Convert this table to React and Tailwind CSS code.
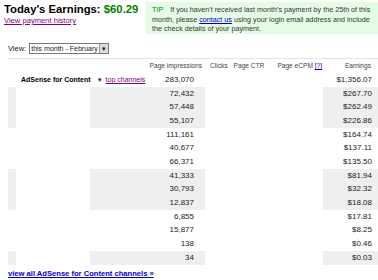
const rows = [
  ['72,432', '$267.70'],
  ['57,448', '$262.49'],
  ['55,107', '$226.86'],
  ['111,161', '$164.74'],
  ['40,677', '$137.11'],
  ['66,371', '$135.50'],
  ['41,333', '$81.94'],
  ['30,793', '$32.32'],
  ['12,837', '$18.08'],
  ['6,855', '$17.81'],
  ['15,877', '$8.25'],
  ['138', '$0.46'],
  ['34', '$0.03'],
]

const shade = 'bg-[#efefef]'

function Row({ shaded, name, impressions, earnings }) {
  const bg = shaded ? shade : ''
  return (
    <div className="grid grid-cols-[8px_74px_115px_118px_1fr] h-[13.7px] items-center">
      <div className={`h-full ${bg}`} />
      <div className="h-full flex items-center overflow-visible">{name}</div>
      <div className={`h-full flex items-center justify-end pr-[11px] ${bg}`}>{impressions}</div>
      <div className="h-full" />
      <div className={`h-full flex items-center justify-end pr-[6px] ${bg}`}>{earnings}</div>
    </div>
  )
}

export default function App() {
  return (
    <div className="w-[378px] h-[280px] bg-white overflow-hidden whitespace-nowrap text-[8px] leading-none text-[#222] font-['Liberation_Sans',Arial,sans-serif]">
      <div className="flex items-start">
        <div className="pl-[4px] pt-[3px]">
          <div className="text-[11.3px] font-bold text-black leading-[12px]">
            Today's Earnings: <span className="text-[#008000]">$60.29</span>
          </div>
          <a href="#" className="block mt-[2px] text-[7.6px] text-[#800080] underline">View payment history</a>
        </div>
        <div className="ml-auto mt-[2px] w-[232px] h-[32px] bg-[#e6fbe6] pl-[6px] pt-[3px] text-[7.2px] leading-[9.5px] text-[#333]">
          <span className="text-[#008000]">TIP</span>
          <span className="ml-[7px]">If you haven't received last month's payment by the 25th of this</span>
          <br />
          month, please <a href="#" className="text-[#0000cc] underline">contact us</a> using your login email address and include
          <br />
          the check details of your payment.
        </div>
      </div>

      <div className="flex items-center mt-[9px] pl-[8px] text-[7.5px]">
        <span>View:</span>
        <div className="ml-[3px] flex items-center h-[11px] border border-[#777] bg-white">
          <span className="px-[1px] text-[7px] leading-[9px]">this month - February</span>
          <span className="w-[9px] h-full bg-[#dcdcdc] border-l border-[#999] flex items-center justify-center text-[6px]">▼</span>
        </div>
      </div>

      <div className="ml-[8px] mt-[4px] border-t border-[#e4e4e4]">
        <div className="grid grid-cols-[8px_74px_115px_118px_1fr] h-[13px] items-center mt-[1px] text-[6.6px] text-[#444]">
          <div />
          <div />
          <div className="text-right pr-[3px]">Page impressions</div>
          <div className="flex items-center pl-[5px]">
            <span>Clicks</span>
            <span className="ml-[6px]">Page CTR</span>
            <span className="ml-[13px]">
              Page eCPM <span className="text-[#0000cc] underline">[?]</span>
            </span>
          </div>
          <div className="text-right pr-[7px]">Earnings</div>
        </div>
        <Row
          shaded={false}
          name={
            <span className="flex items-center">
              <span className="font-bold text-[7px] text-black ml-[5px]">AdSense for Content</span>
              <span className="ml-[6px] text-[6px]">▼</span>
              <a href="#" className="ml-[3px] text-[7px] text-[#800080] underline">top channels</a>
            </span>
          }
          impressions="283,070"
          earnings="$1,356.07"
        />
        {rows.map((r, i) => (
          <Row key={i} shaded={Math.floor(i / 3) % 2 === 0} name="" impressions={r[0]} earnings={r[1]} />
        ))}
      </div>

      <a href="#" className="block mt-[5px] ml-[8px] text-[7.6px] font-bold text-[#0000cc] underline">
        view all AdSense for Content channels »
      </a>
    </div>
  )
}
